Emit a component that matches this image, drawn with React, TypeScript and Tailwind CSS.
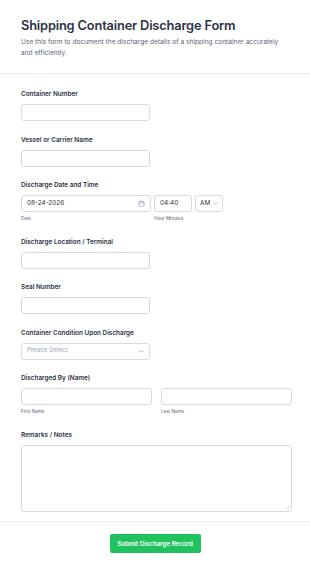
function Label({ children }: { children: React.ReactNode }) {
  return (
    <div className="text-[6.4px] leading-[10px] font-semibold text-[#2c3345]">
      {children}
    </div>
  );
}

function Sub({ children }: { children: React.ReactNode }) {
  return <div className="mt-[3px] text-[4.6px] leading-[8px] text-[#57647e]">{children}</div>;
}

function Box({ className = "", children }: { className?: string; children?: React.ReactNode }) {
  return (
    <div
      className={`h-[17px] rounded-[3px] border border-[#d8dae3] bg-white flex items-center px-[5px] text-[6.4px] text-[#2c3345] ${className}`}
    >
      {children}
    </div>
  );
}

function Chevron() {
  return (
    <svg width="5" height="5" viewBox="0 0 10 10" fill="none" stroke="#8a90a3" strokeWidth="1.5">
      <path d="M2 3.5l3 3 3-3" strokeLinecap="round" strokeLinejoin="round" />
    </svg>
  );
}

function Field({ label, children }: { label: string; children: React.ReactNode }) {
  return (
    <div className="flex flex-col">
      <Label>{label}</Label>
      <div className="mt-[5px]">{children}</div>
    </div>
  );
}

export default function App() {
  return (
    <div className="w-[310px] min-h-[570px] bg-white font-['Inter',sans-serif]">
      <div className="px-[21px] pt-[16px] pb-[14px] border-b border-[#e8e9ee]">
        <h1 className="text-[12.8px] leading-[20px] font-semibold text-[#2c3345] tracking-[-0.15px]">
          Shipping Container Discharge Form
        </h1>
        <p className="mt-[1px] text-[6.6px] leading-[11px] text-[#57647e] max-w-[268px]">
          Use this form to document the discharge details of a shipping container accurately and efficiently.
        </p>
      </div>

      <div className="px-[21px] pt-[15px] pb-[9.5px] flex flex-col gap-[13.5px] border-b border-[#eceef2]">
        <Field label="Container Number">
          <Box className="w-[129px]" />
        </Field>
        <Field label="Vessel or Carrier Name">
          <Box className="w-[129px]" />
        </Field>
        <Field label="Discharge Date and Time">
          <div className="flex gap-[3px]">
            <div className="flex flex-col">
              <Box className="w-[130px] justify-between">
                <span>08-24-2026</span>
                <svg width="7" height="7" viewBox="0 0 12 12" fill="none" stroke="#8a90a3" strokeWidth="1">
                  <rect x="1.5" y="2.5" width="9" height="8" rx="1.5" />
                  <path d="M4 1v3M8 1v3M1.5 5.5h9" />
                </svg>
              </Box>
              <Sub>Date</Sub>
            </div>
            <div className="flex flex-col">
              <Box className="w-[38px]">04:40</Box>
              <Sub>Hour Minutes</Sub>
            </div>
            <Box className="w-[28px] gap-[3px] !px-[4px]">
              <span>AM</span>
              <Chevron />
            </Box>
          </div>
        </Field>
        <Field label="Discharge Location / Terminal">
          <Box className="w-[129px]" />
        </Field>
        <Field label="Seal Number">
          <Box className="w-[129px]" />
        </Field>
        <Field label="Container Condition Upon Discharge">
          <Box className="w-[129px] justify-between">
            <span className="text-[#a3a8b8]">Please Select</span>
            <Chevron />
          </Box>
        </Field>
        <Field label="Discharged By (Name)">
          <div className="flex gap-[9px]">
            <div className="flex flex-col">
              <Box className="w-[131px]" />
              <Sub>First Name</Sub>
            </div>
            <div className="flex flex-col">
              <Box className="w-[131px]" />
              <Sub>Last Name</Sub>
            </div>
          </div>
        </Field>
        <Field label="Remarks / Notes">
          <div className="relative h-[67px] w-[271px] rounded-[3px] border border-[#d8dae3] bg-white">
            <svg className="absolute right-[1px] bottom-[1px]" width="5" height="5" viewBox="0 0 6 6" stroke="#b8bcc8" strokeWidth="0.8">
              <path d="M5.5 1L1 5.5M5.5 3.5L3.5 5.5" />
            </svg>
          </div>
        </Field>
      </div>

      <div className="flex justify-center pt-[12px]">
        <button className="h-[19px] w-[91px] rounded-[2px] bg-[#1fc25c] text-white text-[6.2px] font-semibold">
          Submit Discharge Record
        </button>
      </div>
    </div>
  );
}
